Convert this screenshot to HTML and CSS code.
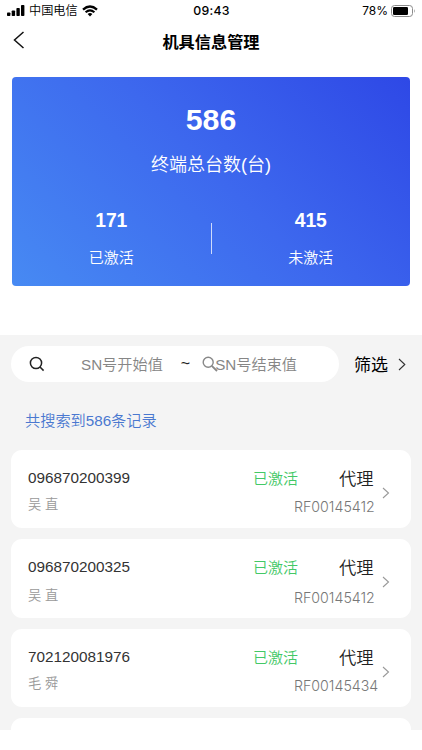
FILE: index.html
```html
<!DOCTYPE html>
<html lang="zh-CN">
  <head>
    <meta charset="UTF-8" />
    <meta name="viewport" content="width=device-width, initial-scale=1.0" />
    <title>机具信息管理</title>
    <link rel="stylesheet" href="styles.css">
  </head>
  <body>
    <div class="status-bar">
      <div class="carrier">
        <svg width="18" height="11" viewBox="0 0 18 11">
          <rect x="0" y="7.5" width="3.4" height="3.5" rx="0.8" />
          <rect x="4.7" y="5.5" width="3.4" height="5.5" rx="0.8" />
          <rect x="9.4" y="3" width="3.4" height="8" rx="0.8" />
          <rect x="14" y="0" width="3.4" height="11" rx="0.8" />
        </svg>
        <span class="carrier-name">中国电信</span>
        <svg width="16" height="12" viewBox="0 0 16 12">
          <path d="M1 4.6 Q8 -1.6 15 4.6" fill="none" stroke="#000" stroke-width="2.3" />
          <path d="M3.6 7.3 Q8 3.3 12.4 7.3" fill="none" stroke="#000" stroke-width="2.1" />
          <path d="M5.6 9 Q8 7 10.4 9 L8 11.5 Z" />
        </svg>
      </div>
      <div class="time">09:43</div>
      <div class="power">
        <span>78%</span>
        <svg width="25" height="12" viewBox="0 0 25 12">
          <rect x="0.5" y="0.5" width="21" height="11" rx="3" fill="none" stroke="#8b8b8b" />
          <rect x="2" y="2" width="15" height="8" rx="1.3" />
          <path d="M23 4 Q24.6 6 23 8 Z" fill="#8b8b8b" />
        </svg>
      </div>
    </div>

    <div class="navbar">
      <svg class="back" width="12" height="18" viewBox="0 0 12 18">
        <path d="M10.5 1 L1.5 9 L10.5 17" fill="none" stroke="#111" stroke-width="1.5" />
      </svg>
      <h1>机具信息管理</h1>
    </div>

    <div class="summary">
      <div class="total">586</div>
      <div class="total-label">终端总台数(台)</div>
      <div class="stats">
        <div class="stat">
          <div class="stat-num">171</div>
          <div class="stat-label">已激活</div>
        </div>
        <div class="divider"></div>
        <div class="stat">
          <div class="stat-num">415</div>
          <div class="stat-label">未激活</div>
        </div>
      </div>
    </div>

    <div class="content">
      <div class="search-row">
        <div class="search">
          <svg class="search-icon" width="16" height="16" viewBox="0 0 16 16">
            <circle cx="7" cy="7" r="5.6" fill="none" stroke="#222" stroke-width="1.5" />
            <path d="M11 11 L14.6 14.6" stroke="#222" stroke-width="1.5" />
          </svg>
          <span class="start">SN号开始值</span>
          <span class="tilde">~</span>
          <svg class="end-icon" width="16" height="16" viewBox="0 0 16 16">
            <circle cx="6.2" cy="6.2" r="5" fill="none" stroke="#888" stroke-width="1.4" />
            <path d="M9.8 9.8 L15 15" stroke="#888" stroke-width="1.8" />
          </svg>
          <span class="end">SN号结束值</span>
        </div>
        <div class="filter">
          <span>筛选</span>
          <svg width="8" height="13" viewBox="0 0 8 13">
            <path d="M1 1 L6.8 6.5 L1 12" fill="none" stroke="#333" stroke-width="1.1" />
          </svg>
        </div>
      </div>

      <div class="count">共搜索到586条记录</div>

      <div class="list">
        <div class="item">
          <div class="sn">096870200399</div>
          <div class="state">已激活</div>
          <div class="role">代理</div>
          <div class="name">吴 直</div>
          <div class="code">RF00145412</div>
          <svg class="arrow" width="8" height="12" viewBox="0 0 8 12">
            <path d="M1 1 L6.5 6 L1 11" fill="none" stroke="#999" stroke-width="1.1" />
          </svg>
        </div>
        <div class="item low">
          <div class="sn">096870200325</div>
          <div class="state">已激活</div>
          <div class="role">代理</div>
          <div class="name">吴 直</div>
          <div class="code">RF00145412</div>
          <svg class="arrow" width="8" height="12" viewBox="0 0 8 12">
            <path d="M1 1 L6.5 6 L1 11" fill="none" stroke="#999" stroke-width="1.1" />
          </svg>
        </div>
        <div class="item">
          <div class="sn">702120081976</div>
          <div class="state">已激活</div>
          <div class="role">代理</div>
          <div class="name">毛 舜</div>
          <div class="code">RF00145434</div>
          <svg class="arrow" width="8" height="12" viewBox="0 0 8 12">
            <path d="M1 1 L6.5 6 L1 11" fill="none" stroke="#999" stroke-width="1.1" />
          </svg>
        </div>
        <div class="item"></div>
      </div>
    </div>
  </body>
</html>
```

FILE: styles.css
```css
* {
  box-sizing: border-box;
}

body {
  margin: 0;
  width: 422px;
  height: 750px;
  overflow: hidden;
  background-color: #fff;
  color: #000;
  font-family: "Liberation Sans", "Noto Sans CJK SC", sans-serif;
}

svg {
  display: block;
  flex: none;
}

.status-bar {
  display: grid;
  grid-template-columns: 1fr auto 1fr;
  align-items: center;
  height: 21px;
  padding: 0 6px 0 7px;
  font-family: Inter, "Noto Sans CJK SC", sans-serif;
  font-size: 12px;
  line-height: 21px;
}

.carrier {
  display: flex;
  align-items: center;
}

.carrier-name {
  margin: 0 4px 0 4px;
  font-size: 12.2px;
  font-weight: 350;
}

.time {
  font-size: 12.3px;
  font-weight: 500;
  letter-spacing: 0.3px;
}

.power {
  display: flex;
  align-items: center;
  justify-content: flex-end;
  gap: 3px;
}

.navbar {
  display: grid;
  grid-template-columns: 40px 1fr 40px;
  align-items: center;
  height: 42px;
}

.back {
  margin: -4px 0 0 13px;
}

.navbar h1 {
  margin: 0;
  font-size: 16.2px;
  font-weight: 700;
  line-height: 24px;
  text-align: center;
}

.summary {
  height: 209px;
  margin: 13.5px 12px 0;
  padding-top: 25px;
  border-radius: 4px;
  background: linear-gradient(45deg, #478af3 0%, #3d68ee 52%, #2e48e6 100%);
  color: #fff;
  text-align: center;
}

.total {
  font-size: 30.3px;
  font-weight: 700;
  line-height: 36px;
}

.total-label {
  margin-top: 14px;
  font-size: 18px;
  line-height: 26px;
}

.stats {
  display: flex;
  align-items: center;
  margin-top: 30px;
}

.stat {
  flex: 1;
}

.stat-num {
  font-size: 19.3px;
  font-weight: 700;
  line-height: 26px;
}

.stat-label {
  margin-top: 13px;
  font-size: 15px;
  line-height: 22px;
}

.total-label,
.stat-label {
  font-weight: 350;
}

.divider {
  width: 1px;
  height: 31px;
  background-color: rgba(255, 255, 255, 0.75);
}

.content {
  height: 395px;
  margin-top: 49.5px;
  padding: 11px 11px 0;
  background-color: #f4f4f4;
  overflow: hidden;
}

.search-row {
  display: flex;
  align-items: center;
}

.search {
  display: flex;
  align-items: center;
  width: 328px;
  height: 36px;
  padding-left: 18px;
  border-radius: 18px;
  background-color: #fff;
  color: #868686;
  font-size: 15.2px;
  font-weight: 350;
  white-space: nowrap;
}

.start,
.end,
.filter span {
  padding-bottom: 2px;
}

.start {
  margin-left: 36px;
}

.tilde {
  margin-left: 18px;
  color: #222;
  font-weight: 400;
  font-size: 16px;
}

.end-icon {
  margin-left: 12px;
}

/* the second icon runs into its placeholder */
.end {
  margin-left: -3px;
}

.filter {
  display: flex;
  align-items: center;
  gap: 10px;
  margin-left: 15px;
  font-size: 17px;
  white-space: nowrap;
}

.count {
  margin: 27px 0 0 14px;
  color: #4a78d0;
  font-size: 15.2px;
  font-weight: 350;
  line-height: 24px;
}

.list {
  display: flex;
  flex-direction: column;
  gap: 11px;
  margin-top: 16.5px;
}

.item {
  display: grid;
  grid-template-columns: 225px 41px 1fr 25px 8px;
  grid-template-rows: 28px 28px;
  align-items: center;
  flex: none;
  height: 78.5px;
  padding: 13.5px 21px 0 17px;
  border-radius: 11px;
  background-color: #fff;
  white-space: nowrap;
}

.sn {
  padding-top: 1px;
  color: #333;
  font-size: 15.3px;
}

.state {
  color: #43c866;
  font-size: 15px;
  font-weight: 350;
}

.role {
  grid-column: 3 / 5;
  padding-left: 45px;
  color: #222;
  font-size: 17.3px;
  font-weight: 350;
}

.name {
  grid-column: 1;
  grid-row: 2;
  margin-top: -3px;
  color: #999;
  font-size: 13.3px;
  font-weight: 350;
}

.code {
  grid-column: 2 / 5;
  grid-row: 2;
  padding: 3px 0 0 41px;
  color: #777;
  font-family: Inter, sans-serif;
  font-size: 14.2px;
  font-weight: 300;
}

.low .name {
  margin-top: 0;
}

.low .code {
  padding-top: 6px;
}

.arrow {
  grid-column: 5;
  grid-row: 1 / 3;
  margin-top: 3px;
}
```
